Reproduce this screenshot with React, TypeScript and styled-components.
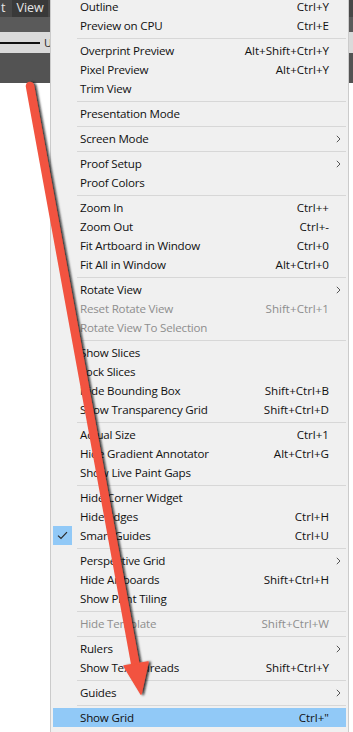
import React from "react";
import styled, { createGlobalStyle } from "styled-components";

type Item = {
  label: string;
  shortcut?: string;
  sub?: boolean;
  disabled?: boolean;
  checked?: boolean;
  active?: boolean;
};

// menu groups, a separator goes between each group
const groups: Item[][] = [
  [
    { label: "Outline", shortcut: "Ctrl+Y" },
    { label: "Preview on CPU", shortcut: "Ctrl+E" },
  ],
  [
    { label: "Overprint Preview", shortcut: "Alt+Shift+Ctrl+Y" },
    { label: "Pixel Preview", shortcut: "Alt+Ctrl+Y" },
    { label: "Trim View" },
  ],
  [{ label: "Presentation Mode" }],
  [{ label: "Screen Mode", sub: true }],
  [{ label: "Proof Setup", sub: true }, { label: "Proof Colors" }],
  [
    { label: "Zoom In", shortcut: "Ctrl++" },
    { label: "Zoom Out", shortcut: "Ctrl+-" },
    { label: "Fit Artboard in Window", shortcut: "Ctrl+0" },
    { label: "Fit All in Window", shortcut: "Alt+Ctrl+0" },
  ],
  [
    { label: "Rotate View", sub: true },
    { label: "Reset Rotate View", shortcut: "Shift+Ctrl+1", disabled: true },
    { label: "Rotate View To Selection", disabled: true },
  ],
  [
    { label: "Show Slices" },
    { label: "Lock Slices" },
    { label: "Hide Bounding Box", shortcut: "Shift+Ctrl+B" },
    { label: "Show Transparency Grid", shortcut: "Shift+Ctrl+D" },
  ],
  [
    { label: "Actual Size", shortcut: "Ctrl+1" },
    { label: "Hide Gradient Annotator", shortcut: "Alt+Ctrl+G" },
    { label: "Show Live Paint Gaps" },
  ],
  [
    { label: "Hide Corner Widget" },
    { label: "Hide Edges", shortcut: "Ctrl+H" },
    { label: "Smart Guides", shortcut: "Ctrl+U", checked: true },
  ],
  [
    { label: "Perspective Grid", sub: true },
    { label: "Hide Artboards", shortcut: "Shift+Ctrl+H" },
    { label: "Show Print Tiling" },
  ],
  [{ label: "Hide Template", shortcut: "Shift+Ctrl+W", disabled: true }],
  [{ label: "Rulers", sub: true }, { label: "Show Text Threads", shortcut: "Shift+Ctrl+Y" }],
  [{ label: "Guides", sub: true }],
  [{ label: "Show Grid", shortcut: 'Ctrl+"', active: true }],
];

const GlobalStyle = createGlobalStyle`
  html, body {
    margin: 0;
    padding: 0;
    overflow: hidden;
  }
  body {
    font-family: "Open Sans", "Noto Sans", sans-serif;
  }
`;

const Chevron: React.FC = () => (
  <svg width="5" height="8" viewBox="0 0 5 8">
    <path d="M0.8 0.8 L4 4 L0.8 7.2" fill="none" stroke="#555" strokeWidth="1" />
  </svg>
);

const Check: React.FC = () => (
  <svg width="11" height="9" viewBox="0 0 11 9">
    <path d="M1 4.6 L4 7.5 L10 1.2" fill="none" stroke="#2b2b2b" strokeWidth="1.2" />
  </svg>
);

const App: React.FC = () => {
  return (
    <Page>
      <GlobalStyle />
      <MenuBar>
        <MenuBarItem>t</MenuBarItem>
        <MenuBarItem $open>View</MenuBarItem>
      </MenuBar>
      <SubBar />
      <ControlBar>
        <StrokeLine />
        <ControlLabel>U</ControlLabel>
      </ControlBar>
      <DocBar />
      <Canvas />

      <Menu>
        {groups.map((group, gi) => (
          <React.Fragment key={gi}>
            {gi > 0 && <Separator />}
            {group.map((item) => (
              <Row key={item.label} $active={item.active} $disabled={item.disabled}>
                <IconCell $checked={item.checked}>{item.checked && <Check />}</IconCell>
                <Label>{item.label}</Label>
                <Shortcut>{item.shortcut}</Shortcut>
                <SubCell>{item.sub && <Chevron />}</SubCell>
              </Row>
            ))}
          </React.Fragment>
        ))}
      </Menu>

      <Arrow width="353" height="732" viewBox="0 0 353 732">
        <defs>
          <filter id="shadow" x="-20%" y="-5%" width="140%" height="110%">
            <feDropShadow dx="2.2" dy="0.5" stdDeviation="1.2" floodColor="#111" floodOpacity="0.85" />
          </filter>
        </defs>
        <g filter="url(#shadow)" fill="#f2533f" stroke="#f2533f">
          <line x1="30" y1="86" x2="136" y2="668" strokeWidth="8.5" strokeLinecap="round" />
          <polygon points="141,694 148,662 124,666" strokeWidth="1.5" strokeLinejoin="round" />
        </g>
      </Arrow>
    </Page>
  );
};

export default App;

const Page = styled.div`
  position: relative;
  width: 353px;
  height: 732px;
  overflow: hidden;
  display: flex;
  flex-direction: column;
  background: #ffffff;
`;

const MenuBar = styled.div`
  height: 17px;
  background: #474747;
  display: flex;
  align-items: stretch;
`;

const MenuBarItem = styled.div<{ $open?: boolean }>`
  padding: 0 4px;
  margin-right: 4px;
  font-size: 12.5px;
  line-height: 16px;
  color: #e6e6e6;
  background: ${(p) => (p.$open ? "#393939" : "transparent")};
  &:first-child {
    padding: 0 3px 0 1px;
  }
`;

const SubBar = styled.div`
  height: 15px;
  background: #5a5a5a;
`;

const ControlBar = styled.div`
  height: 21px;
  background: #dadada;
  display: flex;
  align-items: center;
  gap: 4px;
`;

const StrokeLine = styled.div`
  width: 40px;
  height: 2px;
  background: #111;
`;

const ControlLabel = styled.span`
  font-size: 11px;
  color: #222;
`;

const DocBar = styled.div`
  height: 30px;
  background: #535353;
`;

const Canvas = styled.div`
  flex: 1;
  background: #ffffff;
`;

const Menu = styled.div`
  position: absolute;
  top: -3px;
  left: 50px;
  width: 299px;
  box-sizing: border-box;
  padding: 0 2px 8px;
  background: #f0f0f0;
  border-left: 1px solid #cbcbcb;
  border-right: 1px solid #cbcbcb;
`;

const Row = styled.div<{ $active?: boolean; $disabled?: boolean }>`
  height: 19px;
  display: flex;
  align-items: center;
  font-size: 11.6px;
  color: ${(p) => (p.$disabled ? "#8e8e8e" : "#111")};
  background: ${(p) => (p.$active ? "#91c9f7" : "transparent")};
`;

const IconCell = styled.div<{ $checked?: boolean }>`
  width: 19px;
  height: 19px;
  margin-right: 8px;
  display: flex;
  align-items: center;
  justify-content: center;
  background: ${(p) => (p.$checked ? "#91c9f7" : "transparent")};
`;

const Label = styled.span`
  flex: 1;
  white-space: nowrap;
  letter-spacing: -0.2px;
`;

const Shortcut = styled.span`
  white-space: nowrap;
`;

const SubCell = styled.div`
  width: 16px;
  display: flex;
  align-items: center;
  justify-content: center;
  padding-left: 1px;
`;

const Separator = styled.div`
  height: 1px;
  margin: 2.5px 0 2.5px 24px;
  background: #d7d7d7;
`;

const Arrow = styled.svg`
  position: absolute;
  top: 0;
  left: 0;
  pointer-events: none;
`;
